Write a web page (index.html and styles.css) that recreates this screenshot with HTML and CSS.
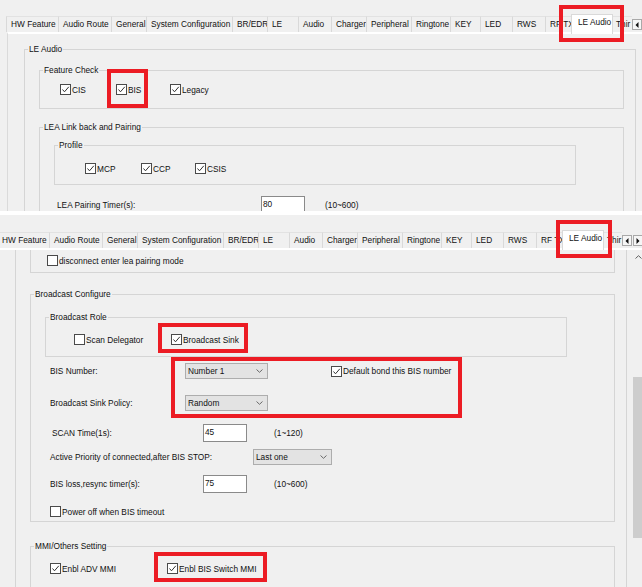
FILE: index.html
```html
<!DOCTYPE html>
<html>
<head>
<meta charset="utf-8">
<title>LE Audio</title>
<link rel="stylesheet" href="styles.css">
</head>
<body>

<div class="shot shot-top">
  <div class="tabbar">
    <div class="tabs-view">
      <div class="tabs">
        <div class="tab">HW Feature</div>
        <div class="tab">Audio Route</div>
        <div class="tab">General</div>
        <div class="tab">System Configuration</div>
        <div class="tab">BR/EDR</div>
        <div class="tab">LE</div>
        <div class="tab">Audio</div>
        <div class="tab">Charger</div>
        <div class="tab">Peripheral</div>
        <div class="tab">Ringtone</div>
        <div class="tab">KEY</div>
        <div class="tab">LED</div>
        <div class="tab">RWS</div>
        <div class="tab">RF TX</div>
        <div class="tab tab-sel">LE Audio</div>
        <div class="tab">Thir</div>
      </div>
    </div>
    <div class="tab-arrows">
      <span class="arrow-btn"><svg width="4" height="6" viewBox="0 0 4 6"><path d="M3.5 0 L0.5 3 L3.5 6 Z" fill="#111"/></svg></span>
      <span class="arrow-btn"><svg width="4" height="6" viewBox="0 0 4 6"><path d="M0.5 0 L3.5 3 L0.5 6 Z" fill="#111"/></svg></span>
    </div>
  </div>
  <div class="page">
    <fieldset class="grp grp-outer">
      <legend>LE Audio</legend>
      <div class="body-outer">
        <fieldset class="grp grp-inner">
          <legend>Feature Check</legend>
          <div class="body-feature">
            <div class="cb-row">
              <span class="cb cb-w56"><span class="cb-box"><svg class="tick" viewBox="0 0 9 9"><polyline points="1.5,4.5 3.5,6.8 7.8,1.8"/></svg></span>CIS</span>
              <span class="cb cb-w54"><span class="cb-box"><svg class="tick" viewBox="0 0 9 9"><polyline points="1.5,4.5 3.5,6.8 7.8,1.8"/></svg></span>BIS</span>
              <span class="cb"><span class="cb-box"><svg class="tick" viewBox="0 0 9 9"><polyline points="1.5,4.5 3.5,6.8 7.8,1.8"/></svg></span>Legacy</span>
            </div>
          </div>
        </fieldset>
        <fieldset class="grp grp-inner grp-lea">
          <legend>LEA Link back and Pairing</legend>
          <div class="body-lea">
            <fieldset class="grp grp-sub">
              <legend>Profile</legend>
              <div class="body-profile">
                <div class="cb-row">
                  <span class="cb cb-w56"><span class="cb-box"><svg class="tick" viewBox="0 0 9 9"><polyline points="1.5,4.5 3.5,6.8 7.8,1.8"/></svg></span>MCP</span>
                  <span class="cb cb-w54"><span class="cb-box"><svg class="tick" viewBox="0 0 9 9"><polyline points="1.5,4.5 3.5,6.8 7.8,1.8"/></svg></span>CCP</span>
                  <span class="cb"><span class="cb-box"><svg class="tick" viewBox="0 0 9 9"><polyline points="1.5,4.5 3.5,6.8 7.8,1.8"/></svg></span>CSIS</span>
                </div>
              </div>
            </fieldset>
            <div class="field-row row-pair">
              <span class="lbl lbl-pair">LEA Pairing Timer(s):</span>
              <span class="edit">80</span>
              <span class="hint hint-20">(10~600)</span>
            </div>
          </div>
        </fieldset>
      </div>
    </fieldset>
  </div>
</div>

<div class="shot-gap"></div>

<div class="shot shot-bottom">
  <div class="tabbar">
    <div class="tabs-view">
      <div class="tabs">
        <div class="tab">HW Feature</div>
        <div class="tab">Audio Route</div>
        <div class="tab">General</div>
        <div class="tab">System Configuration</div>
        <div class="tab">BR/EDR</div>
        <div class="tab">LE</div>
        <div class="tab">Audio</div>
        <div class="tab">Charger</div>
        <div class="tab">Peripheral</div>
        <div class="tab">Ringtone</div>
        <div class="tab">KEY</div>
        <div class="tab">LED</div>
        <div class="tab">RWS</div>
        <div class="tab">RF TX</div>
        <div class="tab tab-sel">LE Audio</div>
        <div class="tab">Thir</div>
      </div>
    </div>
    <div class="tab-arrows">
      <span class="arrow-btn"><svg width="4" height="6" viewBox="0 0 4 6"><path d="M3.5 0 L0.5 3 L3.5 6 Z" fill="#111"/></svg></span>
      <span class="arrow-btn"><svg width="4" height="6" viewBox="0 0 4 6"><path d="M0.5 0 L3.5 3 L0.5 6 Z" fill="#111"/></svg></span>
    </div>
  </div>
  <div class="page">
    <div class="scroll-content">
      <div class="cont-outer">
        <div class="cont-lea">
          <span class="cb"><span class="cb-box"></span>disconnect enter lea pairing mode</span>
        </div>

        <fieldset class="grp grp-inner grp-bc">
          <legend>Broadcast Configure</legend>
          <div class="body-bc">
            <fieldset class="grp grp-sub">
              <legend>Broadcast Role</legend>
              <div class="body-role">
                <div class="cb-row">
                  <span class="cb cb-w97"><span class="cb-box"></span>Scan Delegator</span>
                  <span class="cb"><span class="cb-box"><svg class="tick" viewBox="0 0 9 9"><polyline points="1.5,4.5 3.5,6.8 7.8,1.8"/></svg></span>Broadcast Sink</span>
                </div>
              </div>
            </fieldset>

            <div class="field-row row-bis">
              <span class="lbl lbl-135">BIS Number:</span>
              <span class="combo combo-83"><span>Number 1</span><svg class="chev" width="7" height="4" viewBox="0 0 7 4"><polyline points="0.5,0.5 3.5,3.3 6.5,0.5"/></svg></span>
              <span class="cb cb-gap63"><span class="cb-box"><svg class="tick" viewBox="0 0 9 9"><polyline points="1.5,4.5 3.5,6.8 7.8,1.8"/></svg></span>Default bond this BIS number</span>
            </div>

            <div class="field-row row-policy">
              <span class="lbl lbl-135">Broadcast Sink Policy:</span>
              <span class="combo combo-83"><span>Random</span><svg class="chev" width="7" height="4" viewBox="0 0 7 4"><polyline points="0.5,0.5 3.5,3.3 6.5,0.5"/></svg></span>
            </div>

            <div class="field-row row-scan">
              <span class="lbl lbl-153 lbl-scan">SCAN Time(1s):</span>
              <span class="edit">45</span>
              <span class="hint hint-27">(1~120)</span>
            </div>

            <div class="field-row row-active">
              <span class="lbl lbl-203">Active Priority of connected,after BIS STOP:</span>
              <span class="combo combo-79"><span>Last one</span><svg class="chev" width="7" height="4" viewBox="0 0 7 4"><polyline points="0.5,0.5 3.5,3.3 6.5,0.5"/></svg></span>
            </div>

            <div class="field-row row-loss">
              <span class="lbl lbl-153">BIS loss,resync timer(s):</span>
              <span class="edit">75</span>
              <span class="hint hint-27">(10~600)</span>
            </div>

            <div class="row-power">
              <span class="cb"><span class="cb-box"></span>Power off when BIS timeout</span>
            </div>
          </div>
        </fieldset>

        <fieldset class="grp grp-inner grp-mmi">
          <legend>MMI/Others Setting</legend>
          <div class="body-mmi">
            <div class="cb-row">
              <span class="cb cb-w117"><span class="cb-box"><svg class="tick" viewBox="0 0 9 9"><polyline points="1.5,4.5 3.5,6.8 7.8,1.8"/></svg></span>Enbl ADV MMI</span>
              <span class="cb"><span class="cb-box"><svg class="tick" viewBox="0 0 9 9"><polyline points="1.5,4.5 3.5,6.8 7.8,1.8"/></svg></span>Enbl BIS Switch MMI</span>
            </div>
          </div>
        </fieldset>
      </div>
    </div>
    <div class="vscroll">
      <div class="sb-up"><svg width="7" height="4" viewBox="0 0 7 4"><polyline points="0.5,3.5 3.5,0.7 6.5,3.5"/></svg></div>
      <div class="sb-thumb"></div>
    </div>
  </div>
</div>

<div class="mark m1"></div>
<div class="mark m2"></div>
<div class="mark m3"></div>
<div class="mark m4"></div>
<div class="mark m5"></div>
<div class="mark m6"></div>

</body>
</html>
```

FILE: styles.css
```css
* { box-sizing: border-box; }
html, body { margin: 0; padding: 0; }
body {
  width: 642px;
  height: 587px;
  overflow: hidden;
  position: relative;
  background: #fff;
  font-family: "Liberation Sans", Arial, sans-serif;
  font-size: 8.3px;
  color: #111;
}

.shot { position: relative; overflow: hidden; background: #f0f0f0; }
.shot-top { height: 211px; }
.shot-gap { height: 4px; background: #fff; }
.shot-bottom { height: 372px; display: flex; flex-direction: column; }

/* ---------- tabs ---------- */
.tabbar {
  display: flex;
  align-items: flex-start;
  position: relative;
  z-index: 2;
  margin-bottom: -2px;
  flex: none;
}
.shot-top .tabbar { padding-top: 16px; }
.shot-bottom .tabbar { padding-top: 17px; }
.tabs-view {
  overflow: hidden;
  padding: 2px 0;
  margin-top: -2px;
  flex: none;
}
.shot-top .tabs-view { width: 632px; }
.shot-bottom .tabs-view { width: 622px; }
.tabs {
  display: grid;
  grid-template-columns: 52px 53px 35px 86px 35px 31px 33px 35px 45px 39px 30px 32px 33px 28px 38px 60px;
  height: 16px;
}
.shot-top .tabs { margin-left: 6px; }
.shot-bottom .tabs { margin-left: -3px; }
.tab {
  border-left: 1px solid #d9d9d9;
  border-top: 1px solid #e2e2e2;
  background: #f0f0f0;
  padding-left: 4px;
  line-height: 15px;
  white-space: nowrap;
  overflow: hidden;
}
.tab-sel {
  background: #fff;
  margin: -2px;
  border: 1px solid #d9d9d9;
  border-bottom: 0;
  padding-left: 6px;
  position: relative;
  z-index: 1;
}
.tab-arrows { display: flex; gap: 1px; margin-top: 3px; flex: none; }
.arrow-btn {
  width: 10px;
  height: 11px;
  border: 1px solid #a9a9a9;
  background: #f6f6f6;
  display: flex;
  align-items: center;
  justify-content: center;
}

/* ---------- page ---------- */
.page { border-top: 2px solid #fff; background: #f0f0f0; }
.shot-top .page {
  margin-left: 7px;
  border-left: 1px solid #dadada;
  height: 179px;
}
.shot-bottom .page { display: flex; flex: 1; min-height: 0; }

.grp {
  margin: 0;
  padding: 0;
  border: 1px solid #d5d5d5;
  min-width: 0;
}
.grp > legend { padding: 0 1px; margin-left: 3px; line-height: 10px; }
.grp-outer { width: 612px; }
.shot-top .grp-outer { margin: 10px 0 0 16px; }
.grp-inner { width: 585px; }
.grp-sub { width: 522px; }

.body-outer { padding: 11px 0 0 14px; }
.body-feature { padding: 9px 0 13px 20px; }
.grp-lea { margin-top: 13px; }
.body-lea { padding: 8px 0 20px 14px; }
.body-profile { padding: 13px 0 10px 30px; }

/* checkboxes */
.cb-row { display: flex; align-items: center; height: 11px; }
.cb { display: inline-flex; align-items: center; height: 11px; white-space: nowrap; flex: none; }
.cb-box {
  width: 11px;
  height: 11px;
  border: 1px solid #4a4a4a;
  background: #fff;
  margin-right: 1px;
  flex: none;
  display: flex;
}
.tick { width: 9px; height: 9px; }
.tick polyline { fill: none; stroke: #333; stroke-width: 1; }
.cb-w54 { width: 54px; }
.cb-w56 { width: 56px; }
.cb-w97 { width: 97px; }
.cb-w117 { width: 117px; }
.cb-gap63 { margin-left: 63px; }

/* form rows */
.field-row { display: flex; align-items: center; }
.lbl { flex: none; white-space: nowrap; margin-left: 5px; }
.lbl-pair { width: 204px; margin-left: 3px; }
.lbl-135 { width: 135px; }
.lbl-153 { width: 153px; }
.lbl-203 { width: 203px; }
.lbl-scan { padding-left: 2px; }
.row-pair { margin-top: 11px; height: 18px; }

.edit {
  flex: none;
  width: 44px;
  height: 18px;
  border: 1px solid #8a8a8a;
  background: #fff;
  padding: 0 1px;
  line-height: 15px;
}
.hint { flex: none; }
.hint-20 { margin-left: 20px; }
.hint-27 { margin-left: 27px; }

.combo {
  flex: none;
  display: flex;
  align-items: center;
  justify-content: space-between;
  height: 16px;
  border: 1px solid #adadad;
  background: #e3e3e3;
  padding: 0 4px 0 2px;
  white-space: nowrap;
}
.combo-83 { width: 83px; }
.combo-79 { width: 79px; }
.chev polyline { fill: none; stroke: #6a6a6a; stroke-width: 1; }

/* ---------- bottom shot ---------- */
.scroll-content { width: 630px; flex: none; overflow: hidden; }
.cont-outer {
  margin-left: 15px;
  width: 612px;
  height: 100%;
  border-left: 1px solid #d5d5d5;
  border-right: 1px solid #d5d5d5;
  padding-left: 14px;
}
.cont-lea {
  width: 585px;
  border: 1px solid #d5d5d5;
  border-top: 0;
  padding: 5px 0 6px 16px;
  display: flex;
}
.grp-bc { margin-top: 16px; }
.body-bc { padding: 13px 0 4px 14px; }
.body-role { padding: 12px 0 11px 28px; }
.row-bis { margin-top: 6px; height: 16px; }
.row-policy { margin-top: 16px; height: 16px; }
.row-scan { margin-top: 13px; height: 18px; }
.row-active { margin-top: 7px; height: 16px; }
.row-loss { margin-top: 10px; height: 18px; }
.row-power { margin-top: 13px; padding-left: 5px; display: flex; height: 11px; }
.grp-mmi { margin-top: 19px; }
.body-mmi { padding: 12px 0 30px 19px; }

.vscroll { width: 12px; flex: none; background: #f0f0f0; }
.sb-up { height: 13px; display: flex; align-items: center; padding-left: 5px; }
.sb-up polyline { fill: none; stroke: #606060; stroke-width: 1; }
.sb-thumb { margin: 114px 0 0 3px; height: 161px; background: #cdcdcd; }

/* ---------- red annotation marks ---------- */
.mark { position: absolute; border: 4px solid #ec1c24; z-index: 5; }
.m1 { left: 559px; top: 5px; width: 65px; height: 37px; }
.m2 { left: 107px; top: 69px; width: 41px; height: 39px; }
.m3 { left: 556px; top: 220px; width: 56px; height: 38px; }
.m4 { left: 158px; top: 323px; width: 90px; height: 30px; }
.m5 { left: 171px; top: 357px; width: 291px; height: 61px; }
.m6 { left: 154px; top: 552px; width: 113px; height: 30px; }
```
